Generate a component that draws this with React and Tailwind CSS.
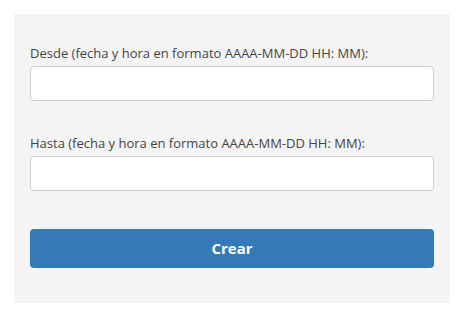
export default function App() {
  return (
    <div className="w-[465px] h-[322px] bg-white p-[14px]" style={{ fontFamily: '"Open Sans", sans-serif' }}>
      <div className="w-[436px] h-[289px] bg-[#f4f4f4] px-4 pt-[30px]">
        <label className="block text-[13px] leading-[18px] text-[#444] mb-1">
          Desde (fecha y hora en formato AAAA-MM-DD HH: MM):
        </label>
        <input type="text" className="block w-full h-[35px] bg-white border border-[#ccc] rounded" />
        <label className="block text-[13px] leading-[18px] text-[#444] mb-1 mt-[33px]">
          Hasta (fecha y hora en formato AAAA-MM-DD HH: MM):
        </label>
        <input type="text" className="block w-full h-[35px] bg-white border border-[#ccc] rounded" />
        <button className="mt-[38px] w-full h-[39px] bg-[#337ab7] rounded text-white font-bold text-[15px]">
          Crear
        </button>
      </div>
    </div>
  );
}
